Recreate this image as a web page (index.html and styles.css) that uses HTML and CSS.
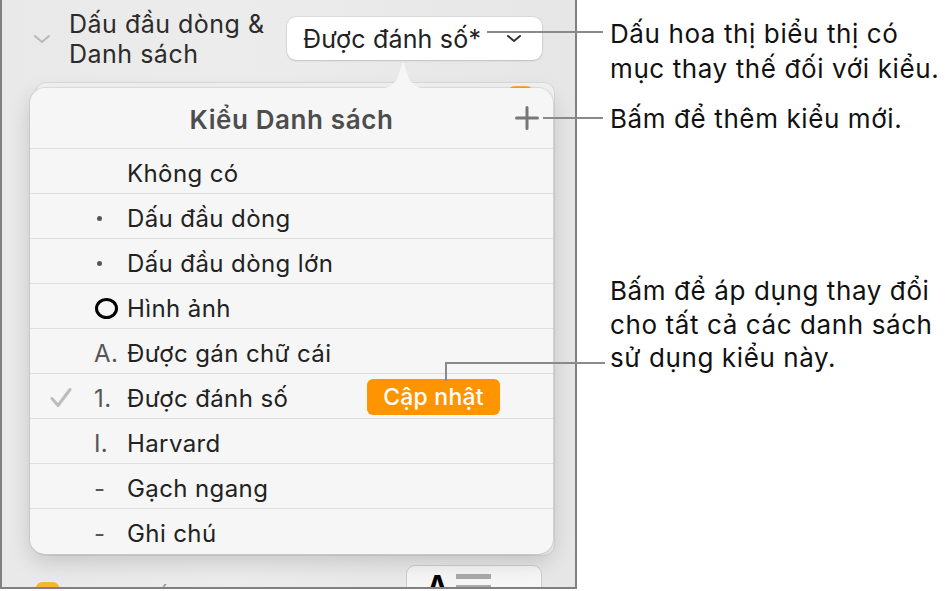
FILE: index.html
```html
<!DOCTYPE html>
<html lang="vi">

<head>
    <meta charset="UTF-8">
    <meta name="viewport" content="width=device-width, initial-scale=1.0">
    <title>Kiểu Danh sách</title>
    <link rel="stylesheet" href="styles.css">
</head>

<body>
    <div class="page">
        <div class="sidebar">
            <div class="section-head">
                <svg class="disclosure" width="18" height="10" viewBox="0 0 18 10">
                    <path d="M2 2 L9 8 L16 2" />
                </svg>
                <div class="section-title">Dấu đầu dòng &amp;<br>Danh sách</div>
                <button class="popup">
                    <span>Được đánh số*</span>
                    <svg width="16" height="9" viewBox="0 0 16 9">
                        <path d="M2 2 L8 7 L14 2" />
                    </svg>
                </button>
            </div>

            <div class="card">
                <span class="toggle"></span>
            </div>

            <div class="bottom-row">
                <span class="checkbox"></span>
                <span class="bottom-label">Đánh số lại</span>
                <div class="align-btn">
                    <b>A</b>
                    <span class="lines"><i></i><i></i></span>
                </div>
            </div>

            <div class="popover">
                <svg class="arrow" width="56" height="28" viewBox="0 0 56 28">
                    <path d="M0 28 C14 28 18 24 22 18 L27 3 Q28 0 29 3 L34 18 C38 24 42 28 56 28 Z" />
                </svg>
                <div class="popover-head">
                    <span></span>
                    <span class="popover-title">Kiểu Danh sách</span>
                    <svg class="add" width="24" height="24" viewBox="0 0 24 24">
                        <path d="M12 1.5 V22.5 M1.5 12 H22.5" />
                    </svg>
                </div>
                <ul class="styles">
                    <li><span class="check"></span><span class="marker"></span><span class="name">Không có</span></li>
                    <li><span class="check"></span><span class="marker"><i class="dot"></i></span><span class="name">Dấu đầu dòng</span></li>
                    <li><span class="check"></span><span class="marker"><i class="dot"></i></span><span class="name">Dấu đầu dòng lớn</span></li>
                    <li><span class="check"></span><span class="marker"><i class="ring"></i></span><span class="name">Hình ảnh</span></li>
                    <li><span class="check"></span><span class="marker">A.</span><span class="name">Được gán chữ cái</span></li>
                    <li>
                        <span class="check">
                            <svg width="22" height="21" viewBox="0 0 22 21">
                                <path d="M2 11.5 L8 18.5 L20 2.5" />
                            </svg>
                        </span>
                        <span class="marker">1.</span>
                        <span class="name">Được đánh số</span>
                        <span class="update">Cập nhật</span>
                    </li>
                    <li><span class="check"></span><span class="marker">I.</span><span class="name">Harvard</span></li>
                    <li><span class="check"></span><span class="marker">-</span><span class="name">Gạch ngang</span></li>
                    <li><span class="check"></span><span class="marker">-</span><span class="name">Ghi chú</span></li>
                </ul>
            </div>
        </div>

        <div class="notes">
            <p class="note note-asterisk">Dấu hoa thị biểu thị có<br>mục thay thế đối với kiểu.</p>
            <p class="note note-add">Bấm để thêm kiểu mới.</p>
            <p class="note note-update">Bấm để áp dụng thay đổi<br>cho tất cả các danh sách<br>sử dụng kiểu này.</p>
        </div>

        <div class="leader leader-asterisk"></div>
        <div class="leader leader-add"></div>
        <div class="leader leader-update"></div>
    </div>
</body>

</html>
```

FILE: styles.css
```css
* {
    box-sizing: border-box;
}

body {
    margin: 0;
    background-color: white;
    font-family: Inter, "Noto Sans", sans-serif;
    color: #222;
}

.page {
    position: relative;
    display: flex;
    width: 950px;
    height: 591px;
    overflow: hidden;
}

/* left panel */

.sidebar {
    position: relative;
    flex: none;
    width: 577px;
    height: 589px;
    background: linear-gradient(to right, #e9e9e9, #ececec 40%, #e6e6e6);
    border: 2px solid #808080;
    border-top: none;
    overflow: hidden;
}

.section-head {
    display: flex;
    align-items: flex-start;
    height: 80px;
    padding: 9px 33px 0 31px;
}

.disclosure {
    margin-top: 25px;
    fill: none;
    stroke: #b9b9b9;
    stroke-width: 2;
    stroke-linecap: round;
    stroke-linejoin: round;
}

.section-title {
    margin-left: 18px;
    font-size: 25px;
    letter-spacing: 0.5px;
    line-height: 30px;
    color: #2b2b2b;
}

.popup {
    display: flex;
    align-items: center;
    margin-left: auto;
    margin-top: 8px;
    width: 255px;
    height: 43px;
    padding: 0 20px 0 16px;
    background-color: white;
    border: none;
    border-radius: 9px;
    box-shadow: 0 0 0 1px rgba(0, 0, 0, 0.06), 0 1px 2px rgba(0, 0, 0, 0.12);
    font-family: inherit;
    font-size: 25px;
    letter-spacing: 0.2px;
    color: #222;
}

.popup svg {
    margin-left: auto;
    fill: none;
    stroke: #333;
    stroke-width: 2;
    stroke-linecap: round;
    stroke-linejoin: round;
}

.card {
    position: relative;
    margin: 2px 0 0 33px;
    width: 520px;
    height: 474px;
    background-color: #f3f3f3;
    border: 1px solid #d9d9d9;
    border-radius: 11px;
}

.toggle {
    position: absolute;
    top: 3px;
    right: 20px;
    width: 27px;
    height: 16px;
    border-radius: 8px;
    background-color: #f5b433;
}

.bottom-row {
    display: flex;
    align-items: flex-start;
    margin-top: 9px;
    padding-left: 34px;
}

.checkbox {
    margin-top: 17px;
    width: 23px;
    height: 23px;
    border-radius: 6px;
    background-color: #f9b52b;
}

.bottom-label {
    margin: 18px 0 0 20px;
    font-size: 23px;
    color: #9a9a9a;
}

.align-btn {
    display: flex;
    align-items: flex-start;
    gap: 8px;
    margin-left: auto;
    margin-right: 33px;
    width: 136px;
    height: 40px;
    padding: 8px 0 0 20px;
    background-color: #f6f6f6;
    border: 1px solid #cdcdcd;
    border-radius: 9px;
}

.align-btn b {
    font-size: 28px;
    line-height: 24px;
    color: black;
}

.align-btn .lines {
    display: flex;
    flex-direction: column;
    gap: 6px;
}

.align-btn .lines i {
    display: block;
    width: 35px;
    height: 5px;
    background-color: #a9a9a9;
}

/* list style popover */

.popover {
    position: absolute;
    top: 88px;
    left: 28px;
    width: 523px;
    height: 466px;
    background-color: #f6f6f6;
    border-radius: 15px;
    box-shadow: 0 0 0 1px rgba(0, 0, 0, 0.07), 0 8px 22px rgba(0, 0, 0, 0.16);
}

.arrow {
    position: absolute;
    top: -27px;
    left: 345px;
    fill: #f6f6f6;
}

.popover-head {
    display: grid;
    grid-template-columns: 1fr auto 1fr;
    align-items: center;
    height: 61px;
    padding: 0 14px;
    border-bottom: 1px solid #dedede;
}

.popover-title {
    margin-top: 2px;
    font-size: 26px;
    font-weight: 600;
    letter-spacing: 0.6px;
    color: #4d4d4d;
}

.add {
    justify-self: end;
    margin-top: -1px;
    fill: none;
    stroke: #777;
    stroke-width: 3;
    stroke-linecap: round;
}

.styles {
    list-style: none;
    margin: 0;
    padding: 0;
}

.styles li {
    display: flex;
    align-items: center;
    height: 45px;
    padding: 5px 0 0 20px;
    border-top: 1px solid #dedede;
    font-size: 24px;
    letter-spacing: 0.4px;
}

.styles li:first-child {
    border-top: none;
    height: 44px;
}

.check {
    display: flex;
    width: 44px;
    margin-top: -3px;
}

.check svg {
    fill: none;
    stroke: #bcbcbc;
    stroke-width: 3;
    stroke-linecap: round;
    stroke-linejoin: round;
}

.marker {
    display: flex;
    align-items: center;
    width: 33px;
    color: #555;
}

.marker .dot {
    display: block;
    margin: 0 0 0 3px;
    width: 5px;
    height: 5px;
    border-radius: 50%;
    background-color: #555;
}

.marker .ring {
    display: block;
    width: 23px;
    height: 21px;
    margin-left: 1px;
    border: 3.5px solid black;
    border-radius: 50%;
}

.name {
    color: #222;
}

.update {
    margin-left: auto;
    margin-right: 53px;
    margin-top: -3px;
    width: 133px;
    height: 36px;
    line-height: 36px;
    text-align: center;
    background-color: #fe9400;
    border-radius: 6px;
    color: white;
    font-size: 23px;
    font-weight: 500;
    letter-spacing: 0.2px;
}

/* callouts on the right */

.notes {
    flex: 1;
    padding-left: 33px;
    font-size: 26px;
    letter-spacing: 0.6px;
    color: #111;
}

.note {
    margin: 0;
    line-height: 35px;
    white-space: nowrap;
}

.note-asterisk {
    margin-top: 16px;
}

.note-add {
    margin-top: 15px;
}

.note-update {
    margin-top: 138px;
    line-height: 33.5px;
}

.leader {
    position: absolute;
    border-color: #8a8a8a;
    border-style: solid;
    border-width: 0;
}

.leader-asterisk {
    top: 31px;
    left: 487px;
    width: 116px;
    border-top-width: 2px;
}

.leader-add {
    top: 117px;
    left: 543px;
    width: 60px;
    border-top-width: 2px;
}

.leader-update {
    top: 362px;
    left: 445px;
    width: 160px;
    height: 19px;
    border-top-width: 2px;
    border-left-width: 2px;
}
```
